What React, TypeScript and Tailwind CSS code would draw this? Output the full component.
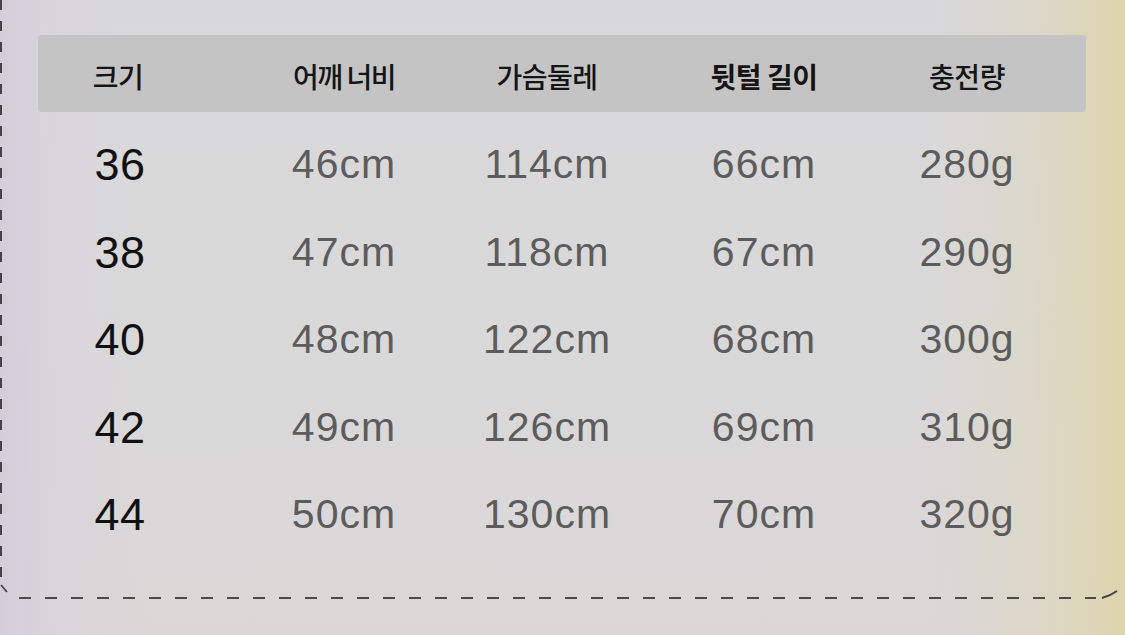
const HEADERS = ["크기", "어깨 너비", "가슴둘레", "뒷털 길이", "충전량"];

const ROWS = [
  ["36", "46cm", "114cm", "66cm", "280g"],
  ["38", "47cm", "118cm", "67cm", "290g"],
  ["40", "48cm", "122cm", "68cm", "300g"],
  ["42", "49cm", "126cm", "69cm", "310g"],
  ["44", "50cm", "130cm", "70cm", "320g"],
];

// column tracks chosen so each cell's centre lands on the picture's column centre
const COLS = "grid grid-cols-[160px_292px_114px_320px_86px]";

export default function App() {
  return (
    <div className="relative w-[1125px] h-[635px] overflow-hidden bg-[linear-gradient(90deg,rgba(212,205,218,0.95)_0%,rgba(216,212,218,0.6)_5%,rgba(217,217,217,0)_13%,rgba(217,217,217,0)_83%,rgba(221,215,192,0.7)_93%,rgba(222,212,172,1)_100%),linear-gradient(180deg,#d8d8db_0%,#d9d9d9_45%,#dad7d7_100%)] font-['Liberation_Sans','Noto_Sans_CJK_KR',sans-serif]">
      {/* dashed frame */}
      <div className="absolute left-0 top-0 w-[2px] h-[582px] bg-[repeating-linear-gradient(to_bottom,#444_0_10px,transparent_10px_21px)]" />
      <div className="absolute left-[19px] top-[597px] w-[1077px] h-[2px] bg-[repeating-linear-gradient(to_right,#4a4a4a_0_12px,transparent_12px_26px)]" />
      <svg className="absolute left-0 top-[584px]" width="10" height="12" viewBox="0 0 10 12">
        <path d="M1 1 L7 8" stroke="#444" strokeWidth="1.8" fill="none" />
      </svg>
      <svg className="absolute left-[1100px] top-[588px]" width="20" height="12" viewBox="0 0 20 12">
        <path d="M2 10 Q10 8 17 3" stroke="#444" strokeWidth="2" fill="none" />
      </svg>

      <div className="pt-[35px] pl-[38px]">
        <div className={`${COLS} w-[1048px] h-[77px] rounded-[3px] bg-[#c4c4c4] items-center`}>
          {HEADERS.map((h, i) => (
            <div key={h} className="flex justify-center pt-[5px]">
              <span className={`whitespace-nowrap text-[28px] leading-none text-[#151515] font-['Noto_Sans_CJK_KR',sans-serif] ${i === 3 ? "font-bold" : "font-medium"} ${i === 1 ? "tracking-[-1.5px]" : "tracking-[-0.5px]"}`}>
                {h}
              </span>
            </div>
          ))}
        </div>

        <div className="mt-[9px]">
          {ROWS.map((r) => (
            <div key={r[0]} className={`${COLS} w-[1048px] h-[87.5px] items-center`}>
              {r.map((v, i) => (
                <div key={i} className={i === 0 ? "flex justify-center pl-[4px]" : "flex justify-center"}>
                  <span
                    className={
                      i === 0
                        ? "whitespace-nowrap text-[45px] leading-none tracking-[0.5px] text-[#111]"
                        : "whitespace-nowrap text-[41px] leading-none tracking-[1px] text-[#5c5c5c]"
                    }
                  >
                    {v}
                  </span>
                </div>
              ))}
            </div>
          ))}
        </div>
      </div>
    </div>
  );
}
